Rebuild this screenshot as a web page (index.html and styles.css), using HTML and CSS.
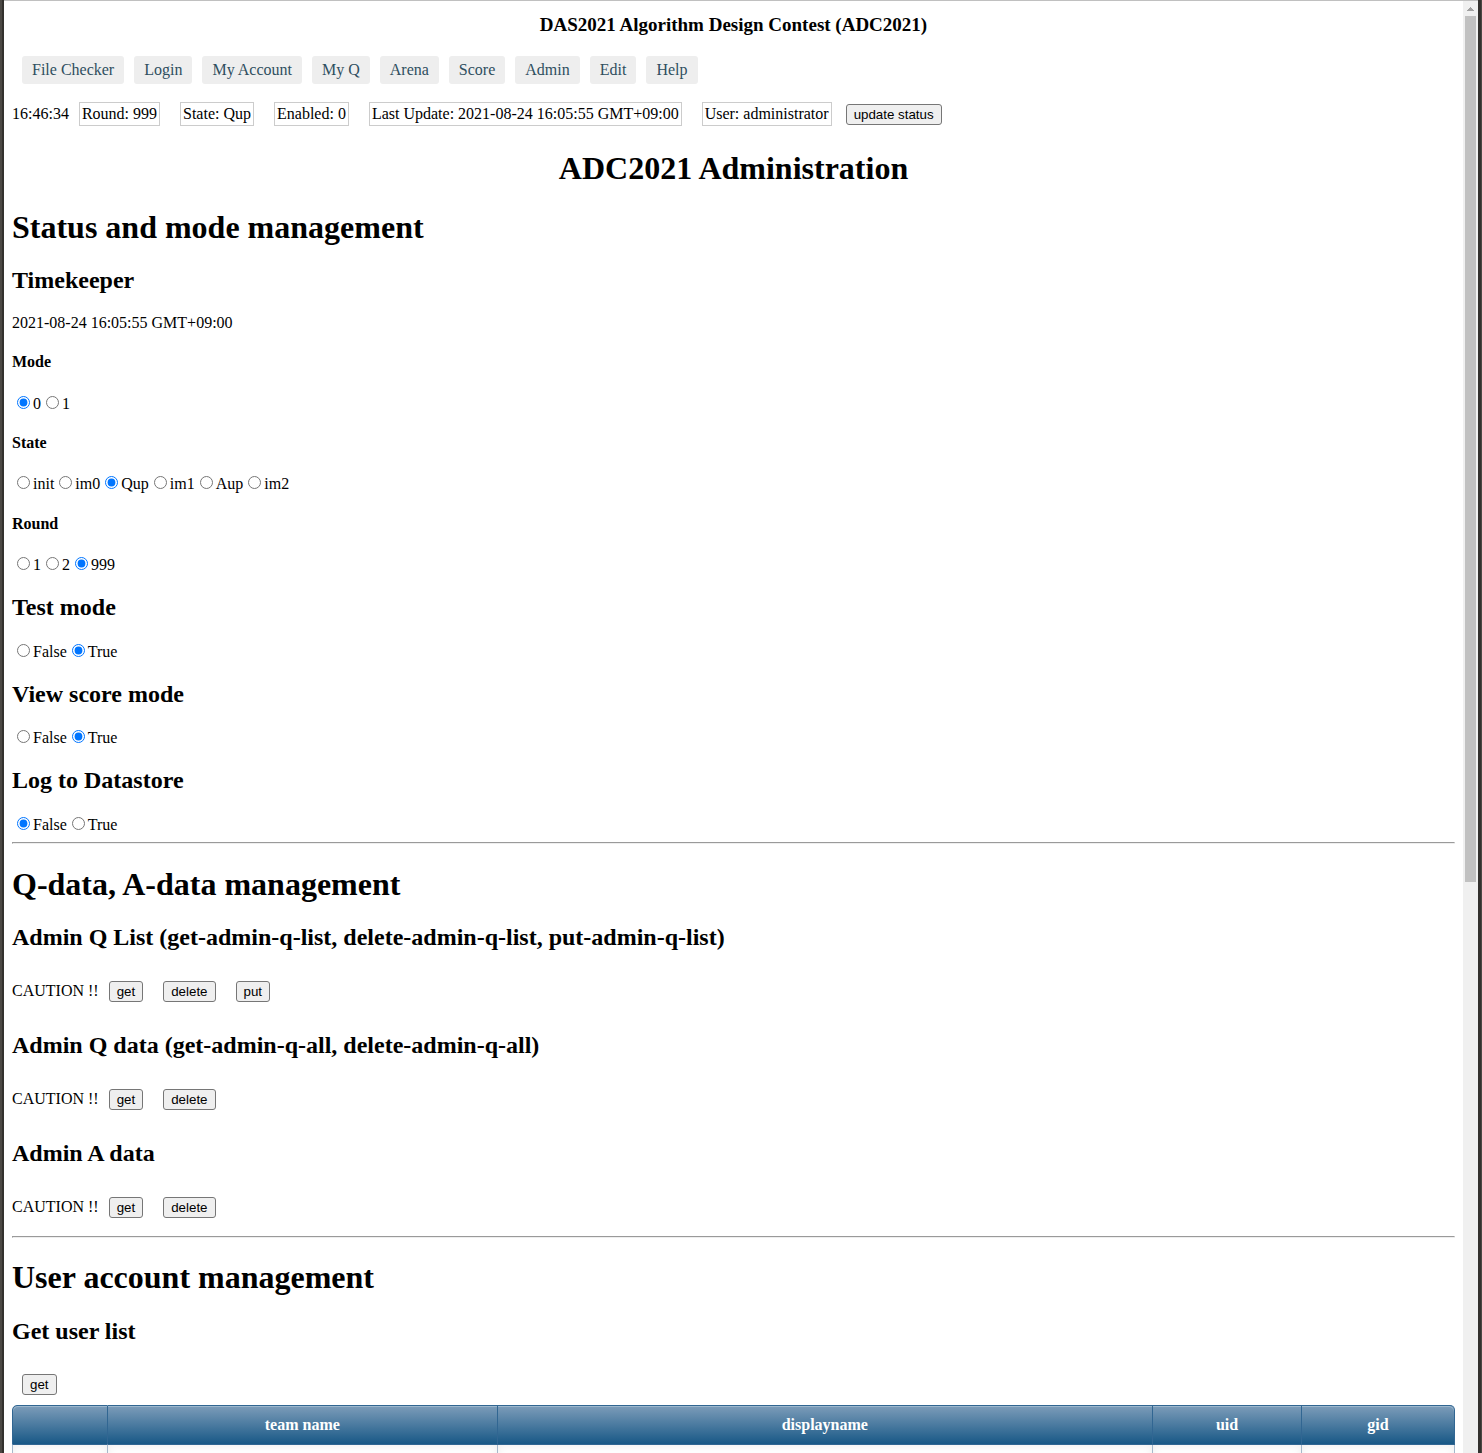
FILE: index.html
```html
<!DOCTYPE html>
<html lang="en">
<head>
<meta charset="utf-8">
<title>ADC2021 Administration</title>
<link rel="stylesheet" href="styles.css">
</head>
<body>
<div class="window">
<main class="page">
<h3 class="contest">DAS2021 Algorithm Design Contest (ADC2021)</h3>
<nav class="menu">
<a href="#">File Checker</a>
<a href="#">Login</a>
<a href="#">My Account</a>
<a href="#">My Q</a>
<a href="#">Arena</a>
<a href="#">Score</a>
<a href="#">Admin</a>
<a href="#">Edit</a>
<a href="#">Help</a>
</nav>
<div class="status">
<span>16:46:34</span>
<span class="item">Round: 999</span>
<span class="item">State: Qup</span>
<span class="item">Enabled: 0</span>
<span class="item">Last Update: 2021-08-24 16:05:55 GMT+09:00</span>
<span class="item">User: administrator</span>
<button type="button">update status</button>
</div>

<h1 class="title">ADC2021 Administration</h1>

<h1>Status and mode management</h1>
<h2>Timekeeper</h2>
<div>2021-08-24 16:05:55 GMT+09:00</div>
<h4>Mode</h4>
<div class="choices"><label><input type="radio" name="mode" checked>0</label><label><input type="radio" name="mode">1</label></div>
<h4>State</h4>
<div class="choices"><label><input type="radio" name="state">init</label><label><input type="radio" name="state">im0</label><label><input type="radio" name="state" checked>Qup</label><label><input type="radio" name="state">im1</label><label><input type="radio" name="state">Aup</label><label><input type="radio" name="state">im2</label></div>
<h4>Round</h4>
<div class="choices"><label><input type="radio" name="round">1</label><label><input type="radio" name="round">2</label><label><input type="radio" name="round" checked>999</label></div>
<h2>Test mode</h2>
<div class="choices"><label><input type="radio" name="test">False</label><label><input type="radio" name="test" checked>True</label></div>
<h2>View score mode</h2>
<div class="choices"><label><input type="radio" name="score">False</label><label><input type="radio" name="score" checked>True</label></div>
<h2>Log to Datastore</h2>
<div class="choices"><label><input type="radio" name="log" checked>False</label><label><input type="radio" name="log">True</label></div>
<hr>

<h1>Q-data, A-data management</h1>
<h2>Admin Q List (get-admin-q-list, delete-admin-q-list, put-admin-q-list)</h2>
<div class="actions">CAUTION !!<button type="button">get</button><button type="button">delete</button><button type="button">put</button></div>
<h2>Admin Q data (get-admin-q-all, delete-admin-q-all)</h2>
<div class="actions">CAUTION !!<button type="button">get</button><button type="button">delete</button></div>
<h2>Admin A data</h2>
<div class="actions">CAUTION !!<button type="button">get</button><button type="button">delete</button></div>
<hr>

<h1>User account management</h1>
<h2>Get user list</h2>
<div class="actions"><button type="button">get</button></div>
<table class="users">
<thead>
<tr><th class="check"></th><th class="team">team name</th><th>displayname</th><th class="uid">uid</th><th class="gid">gid</th></tr>
</thead>
<tbody>
<tr><td></td><td></td><td></td><td></td><td></td></tr>
</tbody>
</table>
</main>
<div class="scrollbar" aria-hidden="true">
<svg class="arrow" width="15" height="15" viewBox="0 0 15 15"><path d="M7 6h1v1h1v1h1v1h1v1H4v-1h1v-1h1v-1h1z" fill="#a0a0a0"/></svg>
<div class="thumb"></div>
<div class="track"></div>
</div>
</div>
</body>
</html>
```
FILE: styles.css
```css
* {
  box-sizing: border-box;
}

body {
  margin: 0;
  background: #4b4844;
  color: #000;
  font-family: "Liberation Serif", "Times New Roman", serif;
  font-size: 16px;
}

.window {
  display: flex;
  height: 100vh;
  overflow: hidden;
  margin: 0 1px 0 2px;
  border: solid #33312e;
  border-width: 0 3px 0 2px;
  background: #fff;
}

.page {
  flex: 1;
  min-width: 0;
  padding: 0 8px;
  border-top: 1px solid #c0c0c0;
}

.contest {
  margin: 13px 0 20px;
  font-size: 19px;
  line-height: 22px;
  text-align: center;
}

.menu {
  display: flex;
  gap: 10px;
  padding: 0 10px;
}

.menu a {
  padding: 5px 10px;
  border-radius: 3px;
  background: #eee;
  color: #2f4f5f;
  text-decoration: none;
}

.status {
  display: flex;
  align-items: baseline;
  padding: 18px 0 3px;
}

.item {
  margin: 0 10px;
  padding: 2px;
  border: 1px solid #ccc;
}

.status button {
  margin-left: 4px;
}

button {
  height: 21px;
  padding: 1px 7px;
  border: 1px solid #767676;
  border-radius: 3px;
  background: #efefef;
  color: #000;
  font-family: "Liberation Sans", Arial, sans-serif;
}

.title {
  text-align: center;
}

.actions button {
  margin: 10px;
}

.users {
  width: 100%;
  table-layout: fixed;
  border-collapse: separate;
  border-spacing: 0;
}

.users th {
  height: 40px;
  padding: 0;
  border: solid #316692;
  border-width: 1px 1px 1px 0;
  background: linear-gradient(#7c9cb9, #185886);
  box-shadow: inset 0 1px 0 #9db8cd;
  color: #fff;
}

.users th:first-child {
  border-left-width: 1px;
  border-top-left-radius: 5px;
}

.users th:last-child {
  border-top-right-radius: 5px;
}

.users td {
  height: 36px;
  border-right: 1px solid #a5b8cb;
  box-shadow: inset 0 1px 8px #eee;
}

.users td:first-child {
  border-left: 1px solid #a5b8cb;
}

.check {
  width: 96px;
}

.team {
  width: 27%;
}

.uid {
  width: 149px;
}

.gid {
  width: 153px;
}

.scrollbar {
  display: flex;
  flex-direction: column;
  width: 15px;
  padding: 0 2px;
  border-top: 1px solid #c0c0c0;
  background: #f0f0f0;
}

.arrow {
  flex: none;
  margin: 0 -2px;
}

.thumb {
  flex: 47;
  background: #c1c1c1;
}

.track {
  flex: 31;
}
```
